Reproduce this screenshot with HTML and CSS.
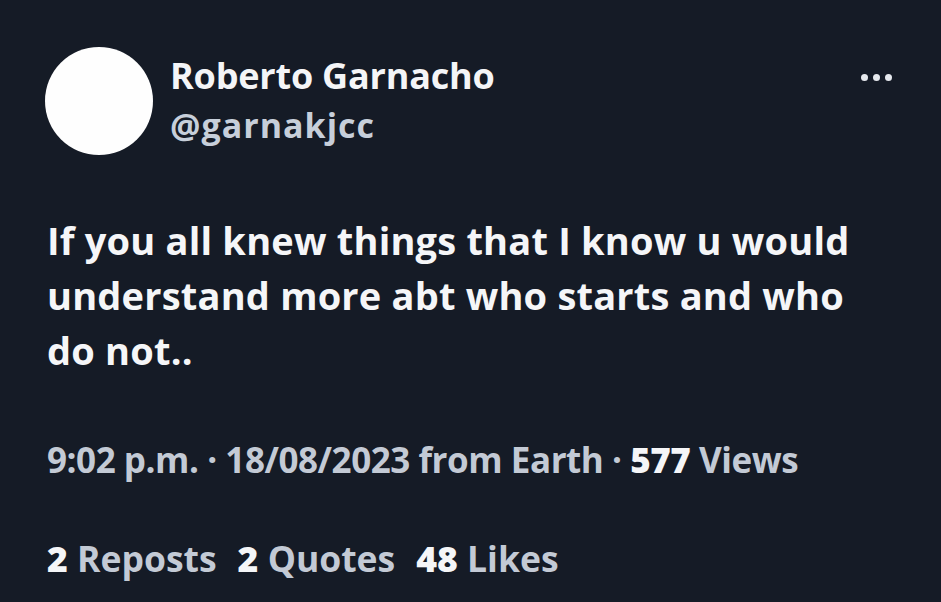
FILE: index.html
```html
<!DOCTYPE html>
<html>
<head>
<meta charset="utf-8">
<link rel="stylesheet" href="styles.css">
</head>
<body>
<div class="tweet">
  <div class="header">
    <div class="avatar"></div>
    <div class="names">
      <div class="name">Roberto Garnacho</div>
      <div class="handle">@garnakjcc</div>
    </div>
    <div class="more"><span></span><span></span><span></span></div>
  </div>
  <div class="text">If you all knew things that I know u would understand more abt who starts and who do not..</div>
  <div class="meta">9:02 p.m. · 18/08/2023 from Earth · <b>577</b> Views</div>
  <div class="stats">
    <span><b>2</b> Reposts</span>
    <span><b>2</b> Quotes</span>
    <span><b>48</b> Likes</span>
  </div>
</div>
</body>
</html>
```

FILE: styles.css
```css
html, body {
  margin: 0;
  padding: 0;
  background: #151b26;
}
body {
  width: 941px;
  height: 602px;
  overflow: hidden;
  font-family: "Open Sans", "Liberation Sans", sans-serif;
  color: #f3f5f8;
}
.tweet {
  padding: 47px 0 0 47px;
}
.header {
  display: flex;
  align-items: flex-start;
}
.avatar {
  width: 108px;
  height: 108px;
  border-radius: 50%;
  background: #fefefe;
  margin-left: -2px;
  flex: none;
}
.names {
  margin-left: 17px;
  margin-top: 8px;
  flex: 1;
}
.name {
  font-weight: 700;
  font-size: 36px;
  line-height: 42px;
  color: #f4f5f7;
  letter-spacing: -0.2px;
}
.handle {
  margin-top: 8px;
  font-weight: 700;
  font-size: 34px;
  line-height: 40px;
  color: #c7cfda;
  letter-spacing: 1px;
}
.more {
  display: flex;
  gap: 5px;
  margin: 27px 49px 0 0;
}
.more span {
  width: 7px;
  height: 7px;
  border-radius: 50%;
  background: #e6e9ee;
}
.text {
  margin-top: 58px;
  width: 830px;
  font-weight: 700;
  font-size: 38px;
  line-height: 55px;
  color: #f5f6f8;
  letter-spacing: 0.2px;
}
.meta {
  margin-top: 62px;
  font-weight: 700;
  font-size: 35px;
  line-height: 40px;
  color: #c3cad5;
  letter-spacing: -0.45px;
}
.meta b {
  color: #f5f6f8;
}
.stats {
  margin-top: 58px;
  display: flex;
  gap: 21px;
  font-weight: 700;
  font-size: 35.5px;
  line-height: 40px;
  color: #c3cad5;
}
.stats b {
  color: #f5f6f8;
}
```
